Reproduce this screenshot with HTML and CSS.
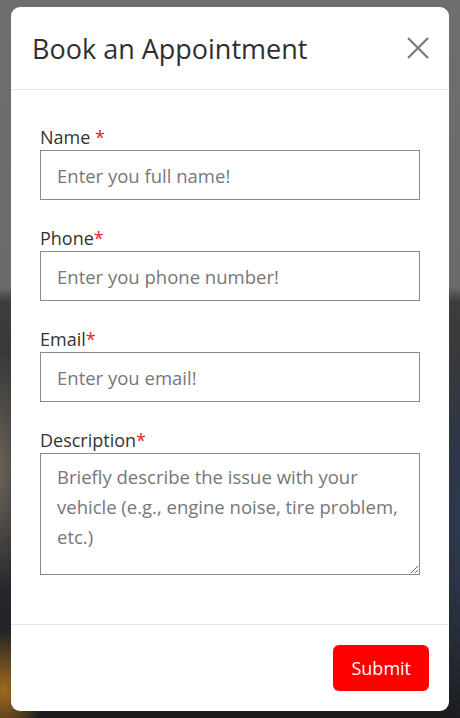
FILE: index.html
```html
<!DOCTYPE html>
<html lang="en">
<head>
    <meta charset="UTF-8">
    <title>Book an Appointment</title>
    <link rel="stylesheet" href="styles.css">
</head>
<body>
    <div class="backdrop">
        <div class="modal">
            <div class="modal-header">
                <h2 class="modal-title">Book an Appointment</h2>
                <button type="button" class="close-btn" aria-label="Close">
                    <svg width="24" height="24" viewBox="0 0 24 24"><path d="M2 2 L22 22 M22 2 L2 22" stroke="#7a7a7a" stroke-width="2.2" fill="none"/></svg>
                </button>
            </div>

            <form id="bookingForm">
                <div class="modal-body">
                    <div class="form-group">
                        <label for="name">Name <span class="req">*</span></label>
                        <input type="text" id="name" placeholder="Enter you full name!">
                    </div>
                    <div class="form-group">
                        <label for="phone">Phone<span class="req">*</span></label>
                        <input type="tel" id="phone" placeholder="Enter you phone number!">
                    </div>
                    <div class="form-group">
                        <label for="email">Email<span class="req">*</span></label>
                        <input type="email" id="email" placeholder="Enter you email!">
                    </div>
                    <div class="form-group">
                        <label for="description">Description<span class="req">*</span></label>
                        <textarea id="description" rows="3" placeholder="Briefly describe the issue with your vehicle (e.g., engine noise, tire problem, etc.)"></textarea>
                    </div>
                </div>

                <div class="modal-footer">
                    <button type="submit" class="submit-btn">Submit</button>
                </div>
            </form>
        </div>
    </div>
</body>
</html>
```

FILE: styles.css
```css
* { box-sizing: border-box; }
html, body { margin: 0; height: 100%; }
body { font-family: "Open Sans", Arial, sans-serif; color: #2b2b2b; }
.backdrop {
    height: 100%;
    padding: 7px 11px;
    background:
        radial-gradient(ellipse 40px 60px at 4px 690px, #a06a1c, transparent),
        radial-gradient(ellipse 30px 120px at 0 470px, #6b6358, transparent),
        radial-gradient(ellipse 30px 200px at 460px 520px, #2c3a52, transparent),
        linear-gradient(180deg, #6e6e6e 0%, #6a6a6a 40%, #3e3d3b 42%, #2e2f33 70%, #1b1c20 100%);
}
.modal { background: #fff; border-radius: 9px; height: 704px; display: flex; flex-direction: column; }
.modal-header { display: flex; align-items: center; justify-content: space-between; height: 83px; padding: 0 19px 0 21px; border-bottom: 1px solid #e6e6e6; }
.modal-title { margin: 0; font-size: 27px; font-weight: 400; color: #2f2f2f; }
.close-btn { background: none; border: none; padding: 0; width: 24px; height: 24px; cursor: pointer; }
#bookingForm { flex: 1; display: flex; flex-direction: column; }
.modal-body { flex: 1; padding: 35px 29px 0 29px; }
.form-group { margin-bottom: 26px; }
label { display: block; font-size: 18px; line-height: 25px; color: #333; }
.req { color: #e4231f; }
input, textarea { display: block; width: 100%; border: 1px solid #8a8a8a; border-radius: 0; font-family: inherit; font-size: 18.5px; color: #333; padding: 0 16px; }
input { height: 50px; }
textarea { height: 122px; padding: 8px 16px; line-height: 30px; resize: vertical; }
input::placeholder, textarea::placeholder { color: #777; }
.modal-footer { border-top: 1px solid #e6e6e6; padding: 20px 20px 20px; display: flex; justify-content: flex-end; }
.submit-btn { background: #ff0000; color: #fff; border: none; border-radius: 6px; height: 46px; padding: 0 18px; font-family: inherit; font-size: 18px; cursor: pointer; }
```
